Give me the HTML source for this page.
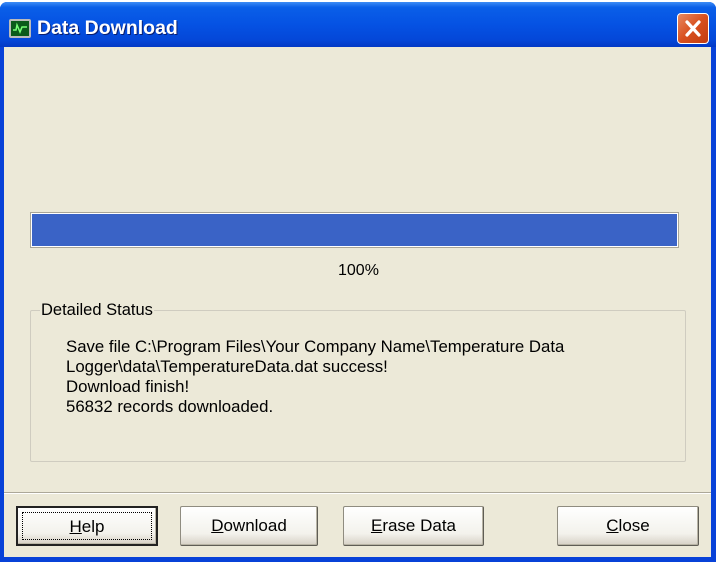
<!DOCTYPE html>
<html><head><meta charset="utf-8"><style>
*{margin:0;padding:0;box-sizing:border-box}
body{width:716px;height:562px;background:#fff;position:relative;overflow:hidden;font-family:"Liberation Sans",Arial,sans-serif}
.win{position:absolute;left:0;top:2px;width:716px;height:560px;background:#0842d8;border-radius:7px 7px 0 0}
.title{position:absolute;left:0;top:0;width:716px;height:45px;border-radius:7px 7px 0 0;background:linear-gradient(#3d8cf5 0%,#0a5fe8 12%,#0552e3 50%,#0447d8 85%,#0339c4 100%)}
.ttext{position:absolute;left:37px;top:15px;color:#fff;font-weight:bold;font-size:19.5px;text-shadow:1px 1px 0 #0a1e70}
.ico{position:absolute;left:9px;top:17px;width:22px;height:19px;background:#111;border:2px solid #bbb;border-radius:2px}
.x{position:absolute;left:677px;top:11px;width:32px;height:31px;border:1px solid #fff;border-radius:4px;background:linear-gradient(135deg,#e88a62,#d8501f 50%,#c23c10)}
.body{position:absolute;left:4px;top:45px;width:707px;height:510px;background:#ece9d8}
.pb{position:absolute;left:30px;top:212px;width:649px;height:36px;border:1px solid #a9a597;background:#fff;padding:1px}
.pb div{width:100%;height:100%;background:#3a63c6}
.pct{position:absolute;left:338px;top:262px;font-size:16px;color:#000}
.gb{position:absolute;left:30px;top:310px;width:656px;height:152px;border:1px solid #cfccc0;border-radius:2px}
.gl{position:absolute;left:40px;top:301px;background:#ece9d8;padding:0 1px;font-size:16.5px}
.st{position:absolute;left:66px;top:337px;font-size:16.8px;line-height:20px;color:#000}
.sep{position:absolute;left:4px;top:492px;width:707px;height:2px;border-top:1px solid #aca899;border-bottom:1px solid #fff}
.btn{position:absolute;top:506px;height:40px;border:1px solid #8f8c80;border-right-color:#5f5d55;border-bottom-color:#5f5d55;border-radius:2px;background:linear-gradient(#fff,#f3f2ec 70%,#d6d0c5);font-size:17px;text-align:center;line-height:37px;color:#000;box-shadow:inset -1px -1px 0 #b8b4a5}
.btn u{text-decoration:underline}
.def{border:2px solid #222;border-radius:0}
.def span{position:absolute;left:4px;top:4px;right:4px;bottom:4px;border:1px dotted #000;line-height:28px}
</style></head><body>
<div class="win">
<div class="title">
<div class="ico"><svg width="18" height="15" viewBox="0 0 18 15"><rect width="18" height="15" fill="#0a5a1a"/><path d="M2 9 L5 9 L6 4 L9 11 L11 6 L16 6" stroke="#7f7" stroke-width="1.5" fill="none"/></svg></div>
<div class="ttext">Data Download</div>
<div class="x"><svg width="30" height="29" viewBox="0 0 30 29"><path d="M9 8 L21 21 M21 8 L9 21" stroke="#fff" stroke-width="3.2" stroke-linecap="round"/></svg></div>
</div>
<div class="body"></div>
</div>
<div class="pb"><div></div></div>
<div class="pct">100%</div>
<div class="gb"></div>
<div class="gl">Detailed Status</div>
<div class="st">Save file C:\Program Files\Your Company Name\Temperature Data<br>Logger\data\TemperatureData.dat success!<br>Download finish!<br>56832 records downloaded.</div>
<div class="sep"></div>
<div class="btn def" style="left:16px;width:142px"><span><u>H</u>elp</span></div>
<div class="btn" style="left:180px;width:138px"><u>D</u>ownload</div>
<div class="btn" style="left:343px;width:141px"><u>E</u>rase Data</div>
<div class="btn" style="left:557px;width:142px"><u>C</u>lose</div>
</body></html>
